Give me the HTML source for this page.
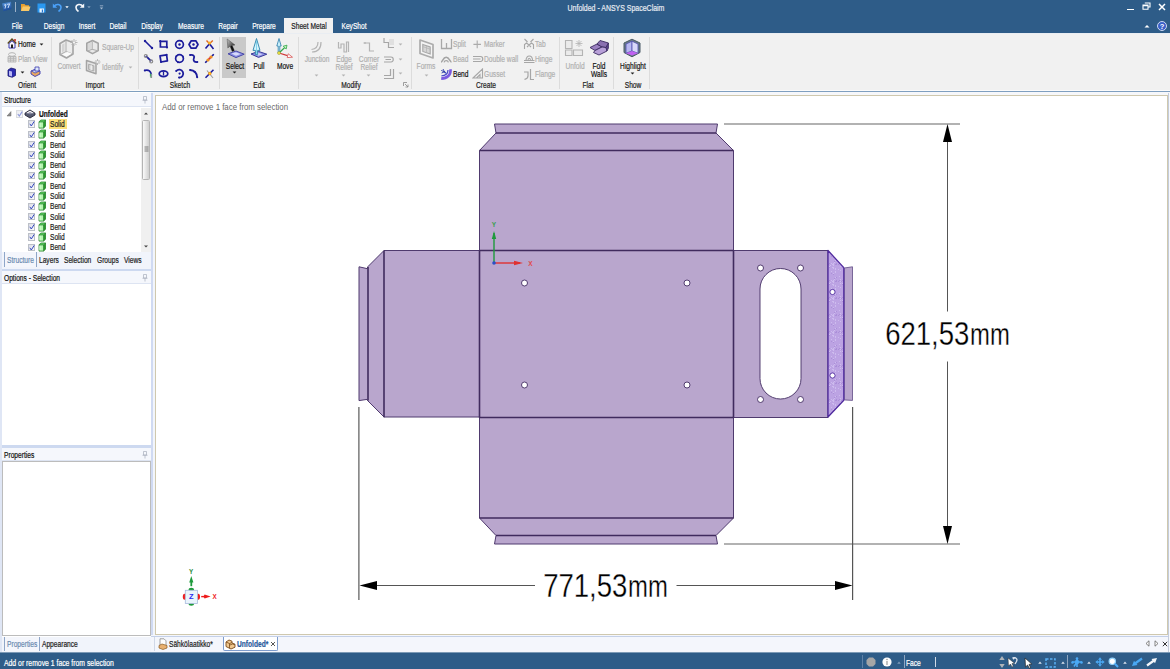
<!DOCTYPE html>
<html><head><meta charset="utf-8"><title>Unfolded - ANSYS SpaceClaim</title>
<style>
*{box-sizing:border-box;margin:0;padding:0}
html,body{width:1170px;height:669px;overflow:hidden;background:#fff}
body{position:relative;font-family:"Liberation Sans",sans-serif;font-size:8px;color:#111;line-height:10px}
.a{position:absolute;white-space:nowrap}
#top{left:0;top:0;width:1170px;height:33px;background:#2e5c88}
#title{left:516.4px;top:3px;width:200px;text-align:center;color:#e6ebf2;font-size:8.5px;transform:scaleX(.82);-webkit-text-stroke:.2px}
.m{-webkit-text-stroke:.2px;color:#fff;top:20.5px;font-size:8.5px;transform:translateX(-50%) scaleX(.78)}
#tabsel{left:284px;top:18px;width:49px;height:16px;background:#f1f1f1}
#ribbon{left:0;top:33px;width:1170px;height:58px;background:#f1f1f1;border-bottom:1px solid #fbfbfb;border-top:1px solid #e9edf2}
#rline{left:0;top:91px;width:1170px;height:1px;background:#7f9fc0}
#rgap{left:0;top:92px;width:1170px;height:4px;background:#f6f7fa}
.gl{-webkit-text-stroke:.2px;top:80px;font-size:8.5px;color:#222;transform:translateX(-50%) scaleX(.78)}
.sep{top:37px;width:1px;height:52px;background:#dcdcdc}
.rt{font-size:8.5px;color:#111}
.dis{color:#b0b0b0}
#left{left:0;top:92px;width:151px;height:561px;background:#fff}
#split{left:151px;top:93px;width:4px;height:560px;background:linear-gradient(90deg,#d0daf2 0,#d0daf2 60%,#f2f5fb 60%)}
.ph{left:0;width:151px;height:13px;background:#f5f7fc;border-bottom:1px solid #dde4f2;padding:2px 0 0 4px;font-size:8.5px;color:#111}
#view{left:155px;top:95px;width:1013px;height:540px;background:#fff;border:1px solid #cfc8ae}
#status{left:0;top:653px;width:1170px;height:16px;background:#2e5c88;color:#fff}
.cb{width:7.5px;height:7.5px;border:1px solid #bcc0c8;background:linear-gradient(135deg,#dadce4,#fafafc)}
.tx{display:inline-block;transform:scaleX(.78);transform-origin:0 50%;font-size:8.5px;-webkit-text-stroke:.2px}
.tc{transform:translateX(-50%) scaleX(.78);font-size:8.5px;-webkit-text-stroke:.2px}
</style></head><body>
<div id="top" class="a"></div>
<div id="title" class="a">Unfolded - ANSYS SpaceClaim</div>
<div id="tabsel" class="a"></div>
<div class="a m" style="left:17px">File</div>
<div class="a m" style="left:54px">Design</div>
<div class="a m" style="left:87px">Insert</div>
<div class="a m" style="left:118px">Detail</div>
<div class="a m" style="left:152px">Display</div>
<div class="a m" style="left:191px">Measure</div>
<div class="a m" style="left:228px">Repair</div>
<div class="a m" style="left:264px">Prepare</div>
<div class="a m" style="left:309px;color:#222">Sheet Metal</div>
<div class="a m" style="left:354px">KeyShot</div>
<div id="ribbon" class="a"></div>
<div id="rline" class="a"></div>
<div id="rgap" class="a"></div>
<!--RIBBON-->
<div class="a sep" style="left:51px"></div>
<div class="a sep" style="left:138px"></div>
<div class="a sep" style="left:219px"></div>
<div class="a sep" style="left:298px"></div>
<div class="a sep" style="left:411px"></div>
<div class="a sep" style="left:559px"></div>
<div class="a sep" style="left:613px"></div>
<div class="a sep" style="left:649px"></div>
<div class="a gl" style="left:27px">Orient</div>
<div class="a gl" style="left:95px">Import</div>
<div class="a gl" style="left:180px">Sketch</div>
<div class="a gl" style="left:259px">Edit</div>
<div class="a gl" style="left:351px">Modify</div>
<div class="a gl" style="left:485.5px">Create</div>
<div class="a gl" style="left:587.5px">Flat</div>
<div class="a gl" style="left:632.5px">Show</div>
<svg class="a" style="left:7px;top:38px" width="10" height="11" viewBox="0 0 10 11"><path d="M0.8,5.5 L5,1.2 L9.2,5.5" fill="none" stroke="#5a4a1a" stroke-width="1.6"/><path d="M7.2,1 h1.6 v2.5 h-1.6z" fill="#c03030"/><path d="M2,5.5 L5,2.8 L8,5.5 V10 H2 Z" fill="#f4f4fa" stroke="#3a3ab0" stroke-width="1"/><rect x="4" y="6.5" width="2" height="3.5" fill="#222"/></svg>
<div class="a rt tx" style="left:17.5px;top:39px">Home</div>
<svg class="a" style="left:39.0px;top:42.5px" width="5" height="3" viewBox="0 0 5 3"><path d="M0.6,0.4 H4.4 L2.5,2.6 Z" fill="#222"/></svg>
<svg class="a" style="left:7px;top:52px" width="10" height="11" viewBox="0 0 10 11"><ellipse cx="5" cy="2.5" rx="3.5" ry="1.8" fill="none" stroke="#b4b4b4" stroke-width="1"/><path d="M1,4.5 H9 V10 H1 Z M1,6.3 H9 M1,8.2 H9 M3.6,4.5 V10 M6.4,4.5 V10" fill="#e4e4e4" stroke="#b4b4b4" stroke-width="0.9"/></svg>
<div class="a rt tx dis" style="left:17.5px;top:53.5px">Plan View</div>
<svg class="a" style="left:7px;top:66.5px" width="10" height="11" viewBox="0 0 10 11"><path d="M1,3 L4,1 L8.5,2.2 V8.5 L5.2,10.3 L1,9 Z" fill="#2a2ab0" stroke="#1a1a70" stroke-width="0.8"/><path d="M2,3.8 L5,4.6 V9.4 L2,8.5 Z" fill="#b8b8f4"/></svg>
<svg class="a" style="left:20.0px;top:70.5px" width="5" height="3" viewBox="0 0 5 3"><path d="M0.6,0.4 H4.4 L2.5,2.6 Z" fill="#222"/></svg>
<svg class="a" style="left:29.5px;top:66px" width="11" height="11" viewBox="0 0 11 11"><path d="M1,5 L6,3 L10,5 V8 L5,10.5 L1,8 Z" fill="#e8a860" stroke="#3a3ab0" stroke-width="0.9"/><path d="M1.5,5 L6,3.3 L9.5,5 L5,7 Z" fill="#c8d8f4" stroke="#3a3ab0" stroke-width="0.7"/><path d="M5,1 h4 v4 h-4z" fill="#dfe8fa" stroke="#3a3ab0" stroke-width="0.8"/></svg>
<svg class="a" style="left:58px;top:38px" width="20" height="22" viewBox="0 0 20 22"><path d="M2,5.5 L8,2 L15,4.5 V16 L8.5,20 L2,16.5 Z" fill="#ececec" stroke="#a4a4a4" stroke-width="1.6" stroke-linejoin="round"/><path d="M8,3 V13.5 L2.5,16.5 M8,13.5 L14.5,16" fill="none" stroke="#b4b4b4" stroke-width="1.1"/><path d="M9.5,14 L13.8,15.6 L8.6,18.6 L4,16.4 Z" fill="#fafafa"/><path d="M4,6.5 L6.5,5.2 V13 L4,14.6 Z" fill="#d4d4d4"/><path d="M16,1 V8 M12.5,4.5 H19.5 M13.5,2 L18.5,7 M18.5,2 L13.5,7" stroke="#b0b0b0" stroke-width="0.9"/><circle cx="16" cy="4.5" r="1.1" fill="#f4f4f4"/></svg>
<div class="a rt tc dis" style="left:69px;top:61px">Convert</div>
<svg class="a" style="left:85px;top:39px" width="15" height="16" viewBox="0 0 15 16"><path d="M1.8,4.2 L7.5,1.6 L13.2,4.2 V11.6 L7.5,14.6 L1.8,11.6 Z" fill="#e9e9e9" stroke="#a4a4a4" stroke-width="1.6" stroke-linejoin="round"/><path d="M7.2,2.5 V10.2 L2.5,12 M7.2,10.2 L12.5,11.8" fill="none" stroke="#b0b0b0" stroke-width="1.1"/><path d="M3,5 L6.3,3.6 V9.6 L3,11 Z" fill="#d8d8d8"/></svg>
<div class="a rt tx dis" style="left:101.5px;top:42px">Square-Up</div>
<svg class="a" style="left:85px;top:58px" width="16" height="17" viewBox="0 0 16 17"><path d="M1.5,2.5 L11,5.5 V15.8 L1.5,12.5 Z" fill="#e4e4e4" stroke="#a4a4a4" stroke-width="1.5" stroke-linejoin="round"/><path d="M3.6,6.2 L8.8,7.8 V13 L3.6,11.4 Z" fill="#d0d0d0" stroke="#acacac" stroke-width="1"/><path d="M6.2,7.2 V12.2" stroke="#f4f4f4" stroke-width="1.2"/><path d="M12.5,1 V7 M9.5,4 H15.5 M10.5,2 L14.5,6 M14.5,2 L10.5,6" stroke="#b0b0b0" stroke-width="0.9"/><circle cx="12.5" cy="4" r="1" fill="#f4f4f4"/></svg>
<div class="a rt tx dis" style="left:101.5px;top:62px">Identify</div>
<svg class="a" style="left:127.5px;top:65.5px" width="5" height="3" viewBox="0 0 5 3"><path d="M0.6,0.4 H4.4 L2.5,2.6 Z" fill="#b4b4b4"/></svg>
<svg class="a" style="left:142.9px;top:38.5px" width="11" height="11" viewBox="0 0 11 11"><path d="M2,2 L9,9" stroke="#1c1c9c" stroke-width="1.6"/><circle cx="2" cy="2" r="1.2" fill="#1c1c9c"/><circle cx="9" cy="9" r="1.2" fill="#1c1c9c"/></svg>
<svg class="a" style="left:158.1px;top:38.5px" width="11" height="11" viewBox="0 0 11 11"><path d="M2.4,2.4 H8.8 V8 H2.4 Z" fill="none" stroke="#1c1c9c" stroke-width="1.7"/><circle cx="2.2" cy="2.2" r="1.1" fill="#1c1c9c"/><circle cx="9" cy="8.4" r="1.1" fill="#1c1c9c"/></svg>
<svg class="a" style="left:173.6px;top:38.5px" width="11" height="11" viewBox="0 0 11 11"><circle cx="5.5" cy="5.5" r="3.9" fill="none" stroke="#1c1c9c" stroke-width="1.7"/><circle cx="5.5" cy="5.5" r="1.2" fill="#1c1c9c"/><circle cx="7.5" cy="1.9" r="0.9" fill="#1c1c9c"/></svg>
<svg class="a" style="left:187.9px;top:38.5px" width="11" height="11" viewBox="0 0 11 11"><path d="M3.2,1.8 H7.8 L10,5.5 L7.8,9.2 H3.2 L1,5.5 Z" fill="none" stroke="#1c1c9c" stroke-width="1.7" stroke-linejoin="round"/><circle cx="5.5" cy="5.5" r="1.2" fill="#1c1c9c"/></svg>
<svg class="a" style="left:203.9px;top:38.5px" width="11" height="11" viewBox="0 0 11 11"><path d="M1.5,9.5 L5.5,4.8 L9.5,10" fill="none" stroke="#1c1c9c" stroke-width="1.6"/><path d="M2.5,1.5 L5.5,4.8 L8.8,1.5" fill="none" stroke="#e06a20" stroke-width="1.4"/><circle cx="5.5" cy="4" r="1.5" fill="#f8b020"/></svg>
<svg class="a" style="left:142.9px;top:52.9px" width="11" height="11" viewBox="0 0 11 11"><path d="M2.8,2.8 L8.2,8.2" stroke="#1c1c9c" stroke-width="1.8"/><circle cx="2.8" cy="3" r="1.5" fill="none" stroke="#8a8a8a" stroke-width="1.1"/><circle cx="8.2" cy="8.4" r="1.5" fill="none" stroke="#8a8a8a" stroke-width="1.1"/></svg>
<svg class="a" style="left:158.1px;top:52.9px" width="11" height="11" viewBox="0 0 11 11"><path d="M2,2.8 L8.6,1.8 L9.4,7.8 L3,9 Z" fill="none" stroke="#1c1c9c" stroke-width="1.7" stroke-linejoin="round"/><circle cx="8.6" cy="1.8" r="1" fill="#1c1c9c"/><circle cx="3" cy="9" r="1" fill="#1c1c9c"/></svg>
<svg class="a" style="left:173.6px;top:52.9px" width="11" height="11" viewBox="0 0 11 11"><circle cx="5.5" cy="5.5" r="3.9" fill="none" stroke="#1c1c9c" stroke-width="1.7"/><circle cx="2.4" cy="3.2" r="1" fill="#1c1c9c"/><circle cx="8.8" cy="3.4" r="1" fill="#1c1c9c"/><circle cx="4" cy="9.2" r="1" fill="#1c1c9c"/></svg>
<svg class="a" style="left:187.9px;top:52.9px" width="11" height="11" viewBox="0 0 11 11"><path d="M2,2 C5.5,1.5 7,3 5.8,5.5 C4.8,7.8 6.5,9.3 9.5,9" fill="none" stroke="#1c1c9c" stroke-width="1.8"/><circle cx="2" cy="2" r="1" fill="#1c1c9c"/><circle cx="9.3" cy="9" r="1" fill="#1c1c9c"/></svg>
<svg class="a" style="left:203.9px;top:52.9px" width="11" height="11" viewBox="0 0 11 11"><path d="M1.5,9.5 L9.5,1.5" stroke="#8a8aa8" stroke-width="1.1"/><path d="M1.2,9.8 L3,8 M8,3 L9.8,1.2" stroke="#1c1c9c" stroke-width="1.5"/><circle cx="4" cy="7" r="1.6" fill="#f09020"/><circle cx="7" cy="4" r="1.6" fill="#f09020"/><circle cx="5.5" cy="5.5" r="1.1" fill="#e03030"/></svg>
<svg class="a" style="left:142.9px;top:67.5px" width="11" height="11" viewBox="0 0 11 11"><path d="M1.5,2.5 C5.5,1 8.3,3.5 8.3,7" fill="none" stroke="#1c1c9c" stroke-width="1.8"/><circle cx="1.8" cy="2.6" r="1" fill="#1c1c9c"/><path d="M8.2,6 V10" stroke="#8a9a90" stroke-width="1.8"/><path d="M7.4,5.5 V8.5" stroke="#30a860" stroke-width="0.9"/></svg>
<svg class="a" style="left:158.1px;top:67.5px" width="11" height="11" viewBox="0 0 11 11"><ellipse cx="5.5" cy="5.7" rx="4.3" ry="2.9" fill="none" stroke="#1c1c9c" stroke-width="1.7"/><path d="M5.5,3.5 V7.5" stroke="#1c1c9c" stroke-width="1.3"/></svg>
<svg class="a" style="left:173.6px;top:67.5px" width="11" height="11" viewBox="0 0 11 11"><path d="M2.2,3 A4,4 0 1 1 5,9.6" fill="none" stroke="#1c1c9c" stroke-width="1.8"/><circle cx="5.6" cy="5.6" r="1.1" fill="#1c1c9c"/><circle cx="2.2" cy="3" r="1" fill="#1c1c9c"/><circle cx="5" cy="9.6" r="1" fill="#1c1c9c"/></svg>
<svg class="a" style="left:187.9px;top:67.5px" width="11" height="11" viewBox="0 0 11 11"><path d="M2,2 C6,2.2 8.8,5 9.2,9.5" fill="none" stroke="#1c1c9c" stroke-width="1.8"/><circle cx="2" cy="2" r="1" fill="#1c1c9c"/><circle cx="6.6" cy="3.9" r="1" fill="#1c1c9c"/><circle cx="9.2" cy="9.3" r="1" fill="#1c1c9c"/></svg>
<svg class="a" style="left:203.9px;top:67.5px" width="11" height="11" viewBox="0 0 11 11"><path d="M1.5,9.8 L9.5,1.8" stroke="#1c1c9c" stroke-width="1.6"/><path d="M3,2.5 L9,10" stroke="#9a9a9a" stroke-width="1.1"/><circle cx="5.8" cy="5.5" r="1.7" fill="#f09020"/><circle cx="5.8" cy="5.5" r="0.8" fill="#f8e020"/></svg>
<div class="a" style="left:222px;top:37px;width:24px;height:41px;background:#c9c9c9"></div>
<svg class="a" style="left:225px;top:37px" width="21" height="22" viewBox="0 0 21 22"><defs><linearGradient id="cg" x1="0" y1="0" x2="1" y2="1"><stop offset="0" stop-color="#c8c8c8"/><stop offset="0.55" stop-color="#555"/><stop offset="1" stop-color="#000"/></linearGradient></defs><path d="M3,16.8 L11,14 L19.2,17.2 L11,20.6 Z" fill="#8f92e6" stroke="#4a4aa8" stroke-width="1"/><path d="M6.5,16.6 L11,15.2 L15.5,17 L11,18.8 Z" fill="#d8dafa"/><path d="M2.2,2 L2.8,11 L5,9.2 L7.2,14.6 L9.4,13.6 L7.2,8.4 L10,8 Z" fill="url(#cg)" stroke="#555" stroke-width="0.5"/><path d="M5.4,9.4 L7.4,14.2 L9,13.4 L7,8.6 Z" fill="#111"/></svg>
<div class="a rt tc" style="left:234.5px;top:60.5px">Select</div>
<svg class="a" style="left:232.0px;top:71.0px" width="5" height="3" viewBox="0 0 5 3"><path d="M0.6,0.4 H4.4 L2.5,2.6 Z" fill="#222"/></svg>
<svg class="a" style="left:248px;top:37px" width="20" height="22" viewBox="0 0 20 22"><path d="M3,17 L10.5,14.4 L18.8,17.2 L10.5,20.4 Z" fill="#8f92e6" stroke="#3a3a98" stroke-width="1"/><path d="M7,17 L10.5,15.8 L14.5,17.2 L10.5,18.8 Z" fill="#d0d2f8"/><path d="M8.5,1.5 L12,13.4 H9.6 V17.6 H7.4 V13.4 H5 Z" fill="#d4f4fc" stroke="#2a82aa" stroke-width="0.9" stroke-linejoin="round"/><path d="M8.5,4 V17" stroke="#7ad0ec" stroke-width="0.9"/></svg>
<div class="a rt tc" style="left:259px;top:60.5px">Pull</div>
<svg class="a" style="left:273.7px;top:36.2px" width="20" height="23" viewBox="0 0 20 23"><path d="M5,2.5 L7.2,10 H5.8 V17 H4.2 V10 H2.8 Z" fill="#c8f0fc" stroke="#2a7aa8" stroke-width="0.8"/><path d="M5,17 L10.5,11.8" stroke="#30a848" stroke-width="1.2"/><path d="M13,9.2 L12.2,13 L9.2,10.2 Z" fill="#c8f4c0" stroke="#30a848" stroke-width="0.8"/><path d="M5,17 L13.5,19.6" stroke="#d03838" stroke-width="1.2"/><path d="M18.5,21.2 L13.2,21.6 L14.2,17.8 Z" fill="#fff" stroke="#d85050" stroke-width="0.8"/><circle cx="5" cy="17" r="1.5" fill="#f4e840" stroke="#8a8a30" stroke-width="0.5"/></svg>
<div class="a rt tc" style="left:284.5px;top:60.5px">Move</div>
<svg class="a" style="left:310px;top:41px" width="13" height="12" viewBox="0 0 13 12"><path d="M8,1 C8,6 6,8 1.5,8.5 M11,1 C11,8 8,11 2,11" fill="none" stroke="#b4b4b4" stroke-width="1.2"/></svg>
<div class="a rt tc dis" style="left:316.5px;top:54.1px">Junction</div>
<svg class="a" style="left:314.0px;top:73.5px" width="5" height="3" viewBox="0 0 5 3"><path d="M0.6,0.4 H4.4 L2.5,2.6 Z" fill="#b4b4b4"/></svg>
<svg class="a" style="left:337px;top:41px" width="13" height="12" viewBox="0 0 13 12"><path d="M1.5,1 V7 H4 V3 H7 V11 H9.5 V1 H11.5 V11" fill="none" stroke="#b4b4b4" stroke-width="1.2"/></svg>
<div class="a rt tc dis" style="left:343.5px;top:54.1px">Edge</div>
<div class="a rt tc dis" style="left:343.5px;top:62.3px">Relief</div>
<svg class="a" style="left:341.0px;top:73.5px" width="5" height="3" viewBox="0 0 5 3"><path d="M0.6,0.4 H4.4 L2.5,2.6 Z" fill="#b4b4b4"/></svg>
<svg class="a" style="left:362px;top:41px" width="13" height="12" viewBox="0 0 13 12"><path d="M1.5,2 H7.5 V10 H12 M3,1 V3" fill="none" stroke="#b4b4b4" stroke-width="1.2"/></svg>
<div class="a rt tc dis" style="left:368.5px;top:54.1px">Corner</div>
<div class="a rt tc dis" style="left:368.5px;top:62.3px">Relief</div>
<svg class="a" style="left:366.0px;top:73.5px" width="5" height="3" viewBox="0 0 5 3"><path d="M0.6,0.4 H4.4 L2.5,2.6 Z" fill="#b4b4b4"/></svg>
<svg class="a" style="left:383.2px;top:37.2px" width="12" height="12" viewBox="0 0 12 12"><path d="M1,1 V5.5 H5.5 V10.5 H11" fill="none" stroke="#a6a6a6" stroke-width="1.2"/><path d="M6,2 H11 V8 H6 Z" fill="#e0e0e0"/></svg>
<svg class="a" style="left:398.0px;top:42.5px" width="5" height="3" viewBox="0 0 5 3"><path d="M0.6,0.4 H4.4 L2.5,2.6 Z" fill="#b4b4b4"/></svg>
<svg class="a" style="left:383.2px;top:55px" width="12" height="9" viewBox="0 0 12 9"><path d="M1,2 H8 C11,2 11,7 8,7 H1 M2.5,4.5 H8" fill="none" stroke="#a6a6a6" stroke-width="1.2"/></svg>
<svg class="a" style="left:398.0px;top:57.5px" width="5" height="3" viewBox="0 0 5 3"><path d="M0.6,0.4 H4.4 L2.5,2.6 Z" fill="#b4b4b4"/></svg>
<svg class="a" style="left:383.2px;top:67.5px" width="12" height="13" viewBox="0 0 12 13"><path d="M1,10.5 H10.5 V1 M1,7.5 H7.5 V1" fill="none" stroke="#a6a6a6" stroke-width="1.2"/></svg>
<svg class="a" style="left:398.0px;top:72.0px" width="5" height="3" viewBox="0 0 5 3"><path d="M0.6,0.4 H4.4 L2.5,2.6 Z" fill="#b4b4b4"/></svg>
<svg class="a" style="left:403px;top:82px" width="6" height="6" viewBox="0 0 6 6"><path d="M0.5,4 V0.5 H4 M2,2 L5,5 M5,2.5 V5 H2.5" fill="none" stroke="#888" stroke-width="0.8"/></svg>
<svg class="a" style="left:418px;top:37.5px" width="17" height="22" viewBox="0 0 17 22"><path d="M2,2 L15,6.5 V20 L2,15.5 Z" fill="#f4f4f4" stroke="#acacac" stroke-width="1.7" stroke-linejoin="round"/><path d="M4.8,6.4 L12.2,9 V16 L4.8,13.4 Z" fill="#d6d6d6" stroke="#a8a8a8" stroke-width="1.1"/><path d="M4.8,8.6 L12.2,11.2 M8.5,7.8 V14.6" stroke="#b8b8b8" stroke-width="0.8"/></svg>
<div class="a rt tc dis" style="left:426px;top:60.5px">Forms</div>
<svg class="a" style="left:423.5px;top:73.5px" width="5" height="3" viewBox="0 0 5 3"><path d="M0.6,0.4 H4.4 L2.5,2.6 Z" fill="#b4b4b4"/></svg>
<svg class="a" style="left:440px;top:38px" width="13" height="12" viewBox="0 0 13 12"><path d="M1.5,1 V10.5 H11.5 V1 M6.5,5 V10.5" fill="none" stroke="#a8a8a8" stroke-width="1.3"/></svg>
<div class="a rt tx dis" style="left:453.0px;top:39px">Split</div>
<svg class="a" style="left:440px;top:54.5px" width="13" height="9" viewBox="0 0 13 9"><path d="M1,7 C2.5,7 3,2.2 6.2,2.2 C9.4,2.2 9.8,7 11.5,7" fill="none" stroke="#a4a4a4" stroke-width="1.5"/><path d="M4,7.4 C4.6,5 7.8,5 8.4,7.4" fill="none" stroke="#a4a4a4" stroke-width="1.2"/></svg>
<div class="a rt tx dis" style="left:453.0px;top:54px">Bead</div>
<svg class="a" style="left:440px;top:68px" width="13" height="12" viewBox="0 0 13 12"><path d="M10.6,1.2 C10.8,7 7.5,10.4 1.2,10.6" fill="none" stroke="#7a5ae0" stroke-width="2.6"/><path d="M8,2 C8,5.6 5.6,7.8 1.4,7.8" fill="none" stroke="#4a4ac8" stroke-width="1.3"/><path d="M1.2,2.4 L6,4.6 M3,1 L5.4,5.6 M1.6,5 L5,3.6" stroke="#2a3aa8" stroke-width="0.9"/></svg>
<div class="a rt tx" style="left:453.0px;top:69px">Bend</div>
<svg class="a" style="left:472px;top:38.5px" width="11" height="11" viewBox="0 0 11 11"><path d="M5.2,1.6 V9.2 M1.4,5.4 H9" stroke="#ababab" stroke-width="1.1"/></svg>
<div class="a rt tx dis" style="left:484.0px;top:39px">Marker</div>
<svg class="a" style="left:472px;top:55px" width="12" height="8" viewBox="0 0 12 8"><path d="M1,1.5 H8.5 C11.5,1.5 11.5,6.5 8.5,6.5 H1 M1,4 H8.5" fill="none" stroke="#a6a6a6" stroke-width="1.2"/></svg>
<div class="a rt tx dis" style="left:484.0px;top:54px">Double wall</div>
<svg class="a" style="left:472px;top:68px" width="12" height="11" viewBox="0 0 12 11"><path d="M1,10 L10.5,1 V10 Z M4.5,10 L8,6.5 V10" fill="none" stroke="#a6a6a6" stroke-width="1.1"/></svg>
<div class="a rt tx dis" style="left:484.0px;top:69px">Gusset</div>
<svg class="a" style="left:523px;top:38px" width="12" height="12" viewBox="0 0 12 12"><path d="M1.5,1 L4.5,4 M10.5,1 L7.5,4 M1.5,11 V6.5 L3.5,5 L6,7 L8.5,5 L10.5,6.5 V11 M4,9 L6,7 L8,9" fill="none" stroke="#a6a6a6" stroke-width="1.1"/></svg>
<div class="a rt tx dis" style="left:535.0px;top:39px">Tab</div>
<svg class="a" style="left:523px;top:54px" width="12" height="10" viewBox="0 0 12 10"><path d="M1,8.5 H11.5 M1,6.5 H11.5" stroke="#a6a6a6" stroke-width="1"/><path d="M3,6.5 C3,0.5 9.5,0.5 9.5,6.5 M5,6.5 C5,3.5 7.5,3.5 7.5,6.5" fill="none" stroke="#a6a6a6" stroke-width="1.1"/></svg>
<div class="a rt tx dis" style="left:535.0px;top:54px">Hinge</div>
<svg class="a" style="left:523px;top:67.5px" width="12" height="13" viewBox="0 0 12 13"><path d="M1,4 H5 V8 C5,10.5 3,11 1.5,11.5 M7.5,1 V11.5 H11" fill="none" stroke="#a6a6a6" stroke-width="1.2"/></svg>
<div class="a rt tx dis" style="left:535.0px;top:69px">Flange</div>
<svg class="a" style="left:564px;top:39px" width="20" height="18" viewBox="0 0 20 18"><path d="M1.5,1.5 H8 V9.5 H1.5 Z M1.5,11 H8 V16.5 H1.5 Z M9.5,11 H18.5 V16.5 H9.5 Z" fill="#ebebeb" stroke="#b4b4b4" stroke-width="1.1"/><path d="M15,1 V8 M11.5,4.5 H18.5 M12.5,2 L17.5,7 M17.5,2 L12.5,7" stroke="#b4b4b4" stroke-width="0.8"/></svg>
<div class="a rt tc dis" style="left:574.5px;top:60.5px">Unfold</div>
<svg class="a" style="left:589px;top:39px" width="21" height="18" viewBox="0 0 21 18"><path d="M1,8.5 L8,5 L13,8 L6,11.5 Z" fill="#9a80c0" stroke="#3a2a60" stroke-width="0.9"/><path d="M8,5 L11,1.5 L19.5,4 L17,8.5 L13,8 Z" fill="#8a70b0" stroke="#3a2a60" stroke-width="0.9"/><path d="M6,11.5 L13,8 L17,8.5 L18,12 L10,16 L4.5,13.5 Z" fill="#b8a0d8" stroke="#3a2a60" stroke-width="0.9"/><path d="M17,8.5 L19.5,4 V9 L18,12 Z" fill="#5a4088" stroke="#3a2a60" stroke-width="0.7"/></svg>
<div class="a rt tc" style="left:598.8px;top:60.5px">Fold</div>
<div class="a rt tc" style="left:598.8px;top:69px">Walls</div>
<svg class="a" style="left:622px;top:38px" width="20" height="20" viewBox="0 0 20 20"><path d="M2,5 L10,1.2 L18,5 V14.5 L10,18.8 L2,14.5 Z" fill="#6a7a88" stroke="#4a5a66" stroke-width="1"/><path d="M4,6 L10,3.2 V13 L4,15.2 Z" fill="#b8b8f0" stroke="#5050b0" stroke-width="0.8"/><path d="M10,3.2 L16,6 V15.2 L10,13 Z" fill="#d8d8fa" stroke="#5050b0" stroke-width="0.8"/><path d="M4,15.2 L10,13 L16,15.2 L10,17.4 Z" fill="#c060f0"/></svg>
<div class="a rt tc" style="left:632.5px;top:60.5px">Highlight</div>
<svg class="a" style="left:630.0px;top:71.5px" width="5" height="3" viewBox="0 0 5 3"><path d="M0.6,0.4 H4.4 L2.5,2.6 Z" fill="#222"/></svg>
<!--/RIBBON-->
<div id="left" class="a"></div>
<div id="split" class="a"></div>
<!--LEFT-->
<div class="a ph" style="top:93px;height:14px"><span class="tx">Structure</span></div>
<svg class="a" style="left:142px;top:96px" width="6" height="8" viewBox="0 0 6 8"><path d="M1.5,0.5 H4.5 V4 H1.5 Z M0.5,4.3 H5.5 M3,4.5 V7.5" fill="none" stroke="#a8adbc" stroke-width="0.7"/></svg>
<svg class="a" style="left:6px;top:110px" width="6" height="7" viewBox="0 0 6 7"><path d="M5,1.6 V6 H1 Z" fill="#8a8a8a" stroke="#6a6a6a" stroke-width="0.5"/></svg>
<div class="a cb" style="left:15.5px;top:110px;opacity:.55"></div>
<svg class="a" style="left:15.5px;top:110px;opacity:.5" width="8" height="8" viewBox="0 0 8 8"><path d="M1.8,4 L3.3,6 L6.2,1.6" fill="none" stroke="#2a3fc0" stroke-width="1.1"/></svg>
<svg class="a" style="left:24px;top:109px" width="12" height="10" viewBox="0 0 12 10"><path d="M1,4.2 L6,1 L11,4.2 L6,7.2 Z" fill="#f4f4f8" stroke="#2a2a3a" stroke-width="1"/><path d="M1,4.2 V6 L6,9 L11,6 V4.2" fill="#555a70" stroke="#2a2a3a" stroke-width="0.9"/><path d="M4,4.2 L6,3 L8,4.2 L6,5.4 Z" fill="#8a8aa0"/></svg>
<div class="a tx" style="left:39px;top:109px;font-weight:bold;color:#111;font-size:8.5px">Unfolded</div>
<div class="a cb" style="left:27.5px;top:120.4px"></div>
<svg class="a" style="left:27.5px;top:120.4px" width="8" height="8" viewBox="0 0 8 8"><path d="M1.8,3.8 L3.3,6 L6.2,1.4" fill="none" stroke="#3448c0" stroke-width="1"/></svg>
<svg class="a" style="left:37.5px;top:119.1px" width="9" height="10" viewBox="0 0 9 10"><path d="M1,2.9 H5.6 V9.1 H1 Z" fill="#b6f6ae"/><path d="M1,2.9 L2.8,1 H7.5 L5.6,2.9 Z" fill="#6cdc6c"/><path d="M5.6,2.9 L7.5,1 V7.3 L5.6,9.1 Z" fill="#2c9c2c"/><path d="M1,2.9 L2.8,1 H7.5 V7.3 L5.6,9.1 H1 Z M1,2.9 H5.6 V9.1 M5.6,2.9 L7.5,1" fill="none" stroke="#1e7e26" stroke-width="0.75" stroke-linejoin="round"/><path d="M1.9,3.8 V8.2" stroke="#eafff0" stroke-width="0.8"/></svg>
<div class="a" style="left:49px;top:119.1px;width:17.5px;height:10px;background:#fbe07a"></div>
<div class="a tx" style="left:50px;top:119.1px;color:#222">Solid</div>
<div class="a cb" style="left:27.5px;top:130.7px"></div>
<svg class="a" style="left:27.5px;top:130.7px" width="8" height="8" viewBox="0 0 8 8"><path d="M1.8,3.8 L3.3,6 L6.2,1.4" fill="none" stroke="#3448c0" stroke-width="1"/></svg>
<svg class="a" style="left:37.5px;top:129.4px" width="9" height="10" viewBox="0 0 9 10"><path d="M1,2.9 H5.6 V9.1 H1 Z" fill="#b6f6ae"/><path d="M1,2.9 L2.8,1 H7.5 L5.6,2.9 Z" fill="#6cdc6c"/><path d="M5.6,2.9 L7.5,1 V7.3 L5.6,9.1 Z" fill="#2c9c2c"/><path d="M1,2.9 L2.8,1 H7.5 V7.3 L5.6,9.1 H1 Z M1,2.9 H5.6 V9.1 M5.6,2.9 L7.5,1" fill="none" stroke="#1e7e26" stroke-width="0.75" stroke-linejoin="round"/><path d="M1.9,3.8 V8.2" stroke="#eafff0" stroke-width="0.8"/></svg>
<div class="a tx" style="left:50px;top:129.4px;color:#222">Solid</div>
<div class="a cb" style="left:27.5px;top:140.9px"></div>
<svg class="a" style="left:27.5px;top:140.9px" width="8" height="8" viewBox="0 0 8 8"><path d="M1.8,3.8 L3.3,6 L6.2,1.4" fill="none" stroke="#3448c0" stroke-width="1"/></svg>
<svg class="a" style="left:37.5px;top:139.6px" width="9" height="10" viewBox="0 0 9 10"><path d="M1,2.9 H5.6 V9.1 H1 Z" fill="#b6f6ae"/><path d="M1,2.9 L2.8,1 H7.5 L5.6,2.9 Z" fill="#6cdc6c"/><path d="M5.6,2.9 L7.5,1 V7.3 L5.6,9.1 Z" fill="#2c9c2c"/><path d="M1,2.9 L2.8,1 H7.5 V7.3 L5.6,9.1 H1 Z M1,2.9 H5.6 V9.1 M5.6,2.9 L7.5,1" fill="none" stroke="#1e7e26" stroke-width="0.75" stroke-linejoin="round"/><path d="M1.9,3.8 V8.2" stroke="#eafff0" stroke-width="0.8"/></svg>
<div class="a tx" style="left:50px;top:139.6px;color:#222">Bend</div>
<div class="a cb" style="left:27.5px;top:151.2px"></div>
<svg class="a" style="left:27.5px;top:151.2px" width="8" height="8" viewBox="0 0 8 8"><path d="M1.8,3.8 L3.3,6 L6.2,1.4" fill="none" stroke="#3448c0" stroke-width="1"/></svg>
<svg class="a" style="left:37.5px;top:149.9px" width="9" height="10" viewBox="0 0 9 10"><path d="M1,2.9 H5.6 V9.1 H1 Z" fill="#b6f6ae"/><path d="M1,2.9 L2.8,1 H7.5 L5.6,2.9 Z" fill="#6cdc6c"/><path d="M5.6,2.9 L7.5,1 V7.3 L5.6,9.1 Z" fill="#2c9c2c"/><path d="M1,2.9 L2.8,1 H7.5 V7.3 L5.6,9.1 H1 Z M1,2.9 H5.6 V9.1 M5.6,2.9 L7.5,1" fill="none" stroke="#1e7e26" stroke-width="0.75" stroke-linejoin="round"/><path d="M1.9,3.8 V8.2" stroke="#eafff0" stroke-width="0.8"/></svg>
<div class="a tx" style="left:50px;top:149.9px;color:#222">Solid</div>
<div class="a cb" style="left:27.5px;top:161.5px"></div>
<svg class="a" style="left:27.5px;top:161.5px" width="8" height="8" viewBox="0 0 8 8"><path d="M1.8,3.8 L3.3,6 L6.2,1.4" fill="none" stroke="#3448c0" stroke-width="1"/></svg>
<svg class="a" style="left:37.5px;top:160.2px" width="9" height="10" viewBox="0 0 9 10"><path d="M1,2.9 H5.6 V9.1 H1 Z" fill="#b6f6ae"/><path d="M1,2.9 L2.8,1 H7.5 L5.6,2.9 Z" fill="#6cdc6c"/><path d="M5.6,2.9 L7.5,1 V7.3 L5.6,9.1 Z" fill="#2c9c2c"/><path d="M1,2.9 L2.8,1 H7.5 V7.3 L5.6,9.1 H1 Z M1,2.9 H5.6 V9.1 M5.6,2.9 L7.5,1" fill="none" stroke="#1e7e26" stroke-width="0.75" stroke-linejoin="round"/><path d="M1.9,3.8 V8.2" stroke="#eafff0" stroke-width="0.8"/></svg>
<div class="a tx" style="left:50px;top:160.2px;color:#222">Bend</div>
<div class="a cb" style="left:27.5px;top:171.8px"></div>
<svg class="a" style="left:27.5px;top:171.8px" width="8" height="8" viewBox="0 0 8 8"><path d="M1.8,3.8 L3.3,6 L6.2,1.4" fill="none" stroke="#3448c0" stroke-width="1"/></svg>
<svg class="a" style="left:37.5px;top:170.4px" width="9" height="10" viewBox="0 0 9 10"><path d="M1,2.9 H5.6 V9.1 H1 Z" fill="#b6f6ae"/><path d="M1,2.9 L2.8,1 H7.5 L5.6,2.9 Z" fill="#6cdc6c"/><path d="M5.6,2.9 L7.5,1 V7.3 L5.6,9.1 Z" fill="#2c9c2c"/><path d="M1,2.9 L2.8,1 H7.5 V7.3 L5.6,9.1 H1 Z M1,2.9 H5.6 V9.1 M5.6,2.9 L7.5,1" fill="none" stroke="#1e7e26" stroke-width="0.75" stroke-linejoin="round"/><path d="M1.9,3.8 V8.2" stroke="#eafff0" stroke-width="0.8"/></svg>
<div class="a tx" style="left:50px;top:170.4px;color:#222">Solid</div>
<div class="a cb" style="left:27.5px;top:182.0px"></div>
<svg class="a" style="left:27.5px;top:182.0px" width="8" height="8" viewBox="0 0 8 8"><path d="M1.8,3.8 L3.3,6 L6.2,1.4" fill="none" stroke="#3448c0" stroke-width="1"/></svg>
<svg class="a" style="left:37.5px;top:180.7px" width="9" height="10" viewBox="0 0 9 10"><path d="M1,2.9 H5.6 V9.1 H1 Z" fill="#b6f6ae"/><path d="M1,2.9 L2.8,1 H7.5 L5.6,2.9 Z" fill="#6cdc6c"/><path d="M5.6,2.9 L7.5,1 V7.3 L5.6,9.1 Z" fill="#2c9c2c"/><path d="M1,2.9 L2.8,1 H7.5 V7.3 L5.6,9.1 H1 Z M1,2.9 H5.6 V9.1 M5.6,2.9 L7.5,1" fill="none" stroke="#1e7e26" stroke-width="0.75" stroke-linejoin="round"/><path d="M1.9,3.8 V8.2" stroke="#eafff0" stroke-width="0.8"/></svg>
<div class="a tx" style="left:50px;top:180.7px;color:#222">Bend</div>
<div class="a cb" style="left:27.5px;top:192.3px"></div>
<svg class="a" style="left:27.5px;top:192.3px" width="8" height="8" viewBox="0 0 8 8"><path d="M1.8,3.8 L3.3,6 L6.2,1.4" fill="none" stroke="#3448c0" stroke-width="1"/></svg>
<svg class="a" style="left:37.5px;top:191.0px" width="9" height="10" viewBox="0 0 9 10"><path d="M1,2.9 H5.6 V9.1 H1 Z" fill="#b6f6ae"/><path d="M1,2.9 L2.8,1 H7.5 L5.6,2.9 Z" fill="#6cdc6c"/><path d="M5.6,2.9 L7.5,1 V7.3 L5.6,9.1 Z" fill="#2c9c2c"/><path d="M1,2.9 L2.8,1 H7.5 V7.3 L5.6,9.1 H1 Z M1,2.9 H5.6 V9.1 M5.6,2.9 L7.5,1" fill="none" stroke="#1e7e26" stroke-width="0.75" stroke-linejoin="round"/><path d="M1.9,3.8 V8.2" stroke="#eafff0" stroke-width="0.8"/></svg>
<div class="a tx" style="left:50px;top:191.0px;color:#222">Solid</div>
<div class="a cb" style="left:27.5px;top:202.6px"></div>
<svg class="a" style="left:27.5px;top:202.6px" width="8" height="8" viewBox="0 0 8 8"><path d="M1.8,3.8 L3.3,6 L6.2,1.4" fill="none" stroke="#3448c0" stroke-width="1"/></svg>
<svg class="a" style="left:37.5px;top:201.3px" width="9" height="10" viewBox="0 0 9 10"><path d="M1,2.9 H5.6 V9.1 H1 Z" fill="#b6f6ae"/><path d="M1,2.9 L2.8,1 H7.5 L5.6,2.9 Z" fill="#6cdc6c"/><path d="M5.6,2.9 L7.5,1 V7.3 L5.6,9.1 Z" fill="#2c9c2c"/><path d="M1,2.9 L2.8,1 H7.5 V7.3 L5.6,9.1 H1 Z M1,2.9 H5.6 V9.1 M5.6,2.9 L7.5,1" fill="none" stroke="#1e7e26" stroke-width="0.75" stroke-linejoin="round"/><path d="M1.9,3.8 V8.2" stroke="#eafff0" stroke-width="0.8"/></svg>
<div class="a tx" style="left:50px;top:201.3px;color:#222">Bend</div>
<div class="a cb" style="left:27.5px;top:212.8px"></div>
<svg class="a" style="left:27.5px;top:212.8px" width="8" height="8" viewBox="0 0 8 8"><path d="M1.8,3.8 L3.3,6 L6.2,1.4" fill="none" stroke="#3448c0" stroke-width="1"/></svg>
<svg class="a" style="left:37.5px;top:211.5px" width="9" height="10" viewBox="0 0 9 10"><path d="M1,2.9 H5.6 V9.1 H1 Z" fill="#b6f6ae"/><path d="M1,2.9 L2.8,1 H7.5 L5.6,2.9 Z" fill="#6cdc6c"/><path d="M5.6,2.9 L7.5,1 V7.3 L5.6,9.1 Z" fill="#2c9c2c"/><path d="M1,2.9 L2.8,1 H7.5 V7.3 L5.6,9.1 H1 Z M1,2.9 H5.6 V9.1 M5.6,2.9 L7.5,1" fill="none" stroke="#1e7e26" stroke-width="0.75" stroke-linejoin="round"/><path d="M1.9,3.8 V8.2" stroke="#eafff0" stroke-width="0.8"/></svg>
<div class="a tx" style="left:50px;top:211.5px;color:#222">Solid</div>
<div class="a cb" style="left:27.5px;top:223.1px"></div>
<svg class="a" style="left:27.5px;top:223.1px" width="8" height="8" viewBox="0 0 8 8"><path d="M1.8,3.8 L3.3,6 L6.2,1.4" fill="none" stroke="#3448c0" stroke-width="1"/></svg>
<svg class="a" style="left:37.5px;top:221.8px" width="9" height="10" viewBox="0 0 9 10"><path d="M1,2.9 H5.6 V9.1 H1 Z" fill="#b6f6ae"/><path d="M1,2.9 L2.8,1 H7.5 L5.6,2.9 Z" fill="#6cdc6c"/><path d="M5.6,2.9 L7.5,1 V7.3 L5.6,9.1 Z" fill="#2c9c2c"/><path d="M1,2.9 L2.8,1 H7.5 V7.3 L5.6,9.1 H1 Z M1,2.9 H5.6 V9.1 M5.6,2.9 L7.5,1" fill="none" stroke="#1e7e26" stroke-width="0.75" stroke-linejoin="round"/><path d="M1.9,3.8 V8.2" stroke="#eafff0" stroke-width="0.8"/></svg>
<div class="a tx" style="left:50px;top:221.8px;color:#222">Bend</div>
<div class="a cb" style="left:27.5px;top:233.4px"></div>
<svg class="a" style="left:27.5px;top:233.4px" width="8" height="8" viewBox="0 0 8 8"><path d="M1.8,3.8 L3.3,6 L6.2,1.4" fill="none" stroke="#3448c0" stroke-width="1"/></svg>
<svg class="a" style="left:37.5px;top:232.1px" width="9" height="10" viewBox="0 0 9 10"><path d="M1,2.9 H5.6 V9.1 H1 Z" fill="#b6f6ae"/><path d="M1,2.9 L2.8,1 H7.5 L5.6,2.9 Z" fill="#6cdc6c"/><path d="M5.6,2.9 L7.5,1 V7.3 L5.6,9.1 Z" fill="#2c9c2c"/><path d="M1,2.9 L2.8,1 H7.5 V7.3 L5.6,9.1 H1 Z M1,2.9 H5.6 V9.1 M5.6,2.9 L7.5,1" fill="none" stroke="#1e7e26" stroke-width="0.75" stroke-linejoin="round"/><path d="M1.9,3.8 V8.2" stroke="#eafff0" stroke-width="0.8"/></svg>
<div class="a tx" style="left:50px;top:232.1px;color:#222">Solid</div>
<div class="a cb" style="left:27.5px;top:243.6px"></div>
<svg class="a" style="left:27.5px;top:243.6px" width="8" height="8" viewBox="0 0 8 8"><path d="M1.8,3.8 L3.3,6 L6.2,1.4" fill="none" stroke="#3448c0" stroke-width="1"/></svg>
<svg class="a" style="left:37.5px;top:242.3px" width="9" height="10" viewBox="0 0 9 10"><path d="M1,2.9 H5.6 V9.1 H1 Z" fill="#b6f6ae"/><path d="M1,2.9 L2.8,1 H7.5 L5.6,2.9 Z" fill="#6cdc6c"/><path d="M5.6,2.9 L7.5,1 V7.3 L5.6,9.1 Z" fill="#2c9c2c"/><path d="M1,2.9 L2.8,1 H7.5 V7.3 L5.6,9.1 H1 Z M1,2.9 H5.6 V9.1 M5.6,2.9 L7.5,1" fill="none" stroke="#1e7e26" stroke-width="0.75" stroke-linejoin="round"/><path d="M1.9,3.8 V8.2" stroke="#eafff0" stroke-width="0.8"/></svg>
<div class="a tx" style="left:50px;top:242.3px;color:#222">Bend</div>
<div class="a" style="left:141px;top:108px;width:9.5px;height:144px;background:#f0f0f0"></div>
<div class="a" style="left:141.5px;top:120px;width:8.5px;height:60px;border:1px solid #b4b4b4;border-radius:1.5px;background:linear-gradient(90deg,#fbfbfb,#cfcfcf)"></div>
<svg class="a" style="left:143px;top:111px" width="6" height="5" viewBox="0 0 6 5"><path d="M1,3.6 L3,1.4 L5,3.6 Z" fill="#444"/></svg>
<svg class="a" style="left:143px;top:244px" width="6" height="5" viewBox="0 0 6 5"><path d="M1,1.4 L3,3.6 L5,1.4 Z" fill="#444"/></svg>
<svg class="a" style="left:143.5px;top:146px" width="5" height="6" viewBox="0 0 5 6"><path d="M0.5,1 H4.5 M0.5,3 H4.5 M0.5,5 H4.5" stroke="#666" stroke-width="0.8"/></svg>
<div class="a" style="left:0;top:252px;width:151px;height:17px;background:#f1f4fb"></div>
<div class="a" style="left:4px;top:252px;width:32.5px;height:15px;border-left:1px solid #8fa6c8;border-right:1px solid #8fa6c8;background:#f4f6fc"></div>
<div class="a tx" style="left:6.5px;top:255px;color:#6a8ab0">Structure</div>
<div class="a tx" style="left:38.5px;top:255px;color:#222">Layers</div>
<div class="a tx" style="left:64px;top:255px;color:#222">Selection</div>
<div class="a tx" style="left:97px;top:255px;color:#222">Groups</div>
<div class="a tx" style="left:124px;top:255px;color:#222">Views</div>
<div class="a" style="left:0;top:268.5px;width:151px;height:2px;background:#cdd9f0"></div>
<div class="a ph" style="top:270.5px;height:13px"><span class="tx">Options - Selection</span></div>
<svg class="a" style="left:142px;top:273.5px" width="6" height="8" viewBox="0 0 6 8"><path d="M1.5,0.5 H4.5 V4 H1.5 Z M0.5,4.3 H5.5 M3,4.5 V7.5" fill="none" stroke="#a8adbc" stroke-width="0.7"/></svg>
<div class="a" style="left:0;top:444.5px;width:151px;height:3px;background:#cdd9f0"></div>
<div class="a ph" style="top:447.5px;height:13px"><span class="tx">Properties</span></div>
<svg class="a" style="left:142px;top:450.5px" width="6" height="8" viewBox="0 0 6 8"><path d="M1.5,0.5 H4.5 V4 H1.5 Z M0.5,4.3 H5.5 M3,4.5 V7.5" fill="none" stroke="#a8adbc" stroke-width="0.7"/></svg>
<div class="a" style="left:1.5px;top:461px;width:149.5px;height:175px;border:1px solid #bcbcbc;background:#fff"></div>
<div class="a" style="left:0;top:637px;width:151px;height:16px;background:#f1f4fb"></div>
<div class="a" style="left:4px;top:637px;width:36px;height:13.5px;border-left:1px solid #8fa6c8;border-right:1px solid #8fa6c8;background:#f4f6fc"></div>
<div class="a tx" style="left:7px;top:638.8px;color:#6a8ab0">Properties</div>
<div class="a tx" style="left:41.5px;top:638.8px;color:#222">Appearance</div>
<div class="a" style="left:0;top:92px;width:1.5px;height:561px;background:#dfe6f5"></div>
<!--/LEFT-->
<div id="view" class="a"></div>
<!--VIEW-->
<svg class="a" style="left:0;top:0" width="1170" height="669" viewBox="0 0 1170 669">
<defs><pattern id="dz" width="13" height="17" patternUnits="userSpaceOnUse"><rect width="13" height="17" fill="#bca3e3"/><path d="M1,12h1v1h-1z M7,4h1v1h-1z M0,12h1v1h-1z M8,9h1v1h-1z M3,16h1v1h-1z M8,11h1v1h-1z M1,8h1v1h-1z M3,0h1v1h-1z M12,8h1v1h-1z M3,5h1v1h-1z M10,11h1v1h-1z M1,10h1v1h-1z M8,7h1v1h-1z M2,7h1v1h-1z M1,9h1v1h-1z M0,9h1v1h-1z M12,16h1v1h-1z M3,13h1v1h-1z M6,14h1v1h-1z M2,7h1v1h-1z M12,1h1v1h-1z M1,1h1v1h-1z M8,15h1v1h-1z M11,10h1v1h-1z M1,13h1v1h-1z M3,14h1v1h-1z" fill="#cdbbee"/><path d="M3,9h1v1h-1z M1,2h1v1h-1z M12,1h1v1h-1z M4,5h1v1h-1z M10,8h1v1h-1z M4,9h1v1h-1z M10,12h1v1h-1z M7,8h1v1h-1z M9,9h1v1h-1z M6,9h1v1h-1z M4,8h1v1h-1z M7,8h1v1h-1z M2,6h1v1h-1z M4,5h1v1h-1z" fill="#ab8fd8"/></pattern></defs>
<g fill="#b9a6cd" stroke="#4f3a6e" stroke-width="1" stroke-linejoin="round">
<!-- vertical strip: top flange, chamfer, body, bottom -->
<path d="M494.5,124 H717.5 L716,133 L733.5,150.5 V518 L716,535.5 L717.5,544 H494.5 L496,535.5 L479.5,518 V150.5 L496,133 Z"/>
<!-- left wing -->
<path d="M479.5,250.5 H384 L368,266.5 L367,268.6 L359,266.8 V400.6 L367,399.4 L368,401 L384,417 H479.5 Z"/>
<!-- right wing -->
<path d="M733.5,250.5 H828 V417.5 H733.5 Z"/>
<!-- right flange -->
<path d="M844.3,268 L852.5,266.8 V400.4 L844.3,399.9 Z" stroke="#6d5a90" stroke-width="0.9"/>
</g>
<g fill="none" stroke="#402b5e" stroke-width="1.5">
<path d="M496,133 H716 M479.5,150.5 H733.5 M479.5,250.5 H733.5 M479.5,417.5 H733.5 M479.5,518 H733.5 M496,535.5 H716"/>
<path d="M384,250.5 V417.2 M368,267 V400.5 M479.5,250.5 V417.5 M733.5,250.5 V417.5" stroke-width="1.6"/>
</g>
<!-- highlighted right chamfer face -->
<path d="M828,250.5 L843.8,267.6 V400.2 L828,417 Z" fill="url(#dz)" stroke="#4f2a9e" stroke-width="1.3" stroke-linejoin="round"/>
<!-- holes -->
<g fill="#fff" stroke="#432d62" stroke-width="0.9">
<circle cx="524.5" cy="283.0" r="3"/><circle cx="687" cy="283.0" r="3"/>
<circle cx="524.5" cy="385.0" r="3"/><circle cx="687" cy="385.0" r="3"/>
<circle cx="760.5" cy="268" r="3"/><circle cx="800.5" cy="268" r="3"/>
<circle cx="760.5" cy="399.5" r="3"/><circle cx="800.5" cy="399.5" r="3"/>
<path d="M760,289 A20.5,20.5 0 0 1 801,289 V378.5 A20.5,20.5 0 0 1 760,378.5 Z"/>
<circle cx="832.5" cy="292" r="2.6" stroke="#4f2a9e"/><circle cx="832.5" cy="375.5" r="2.6" stroke="#4f2a9e"/>
</g>
<!-- dimensions -->
<g stroke="#666" stroke-width="1.2" fill="none">
<path d="M724,124 H960 M724,544 H960"/><path d="M358.9,407 V600" stroke-width="1.1" stroke="#4a4a4a"/>
</g>
<g stroke="#555" stroke-width="1" fill="none">
<path d="M947.5,130 V311.5 M947.5,361.5 V538"/>
<path d="M852.6,407 V600" stroke-width="1.2"/>
<path d="M365,585.5 H535 M676.5,585.5 H846"/>
</g>
<g fill="#000">
<path d="M947.5,124 L952,142 H943 Z M947.5,544 L952,526 H943 Z"/>
<path d="M359.5,585.5 L377,581 V590 Z M852.5,585.5 L835,581 V590 Z"/>
</g>
<g font-family="'Liberation Sans',sans-serif" fill="#000" stroke="#fff" stroke-width="0.3" paint-order="fill stroke">
<text transform="translate(885.2,345) scale(0.81,1)" font-size="34">621,53</text>
<text transform="translate(970,345) scale(0.77,1)" font-size="31">mm</text>
<text transform="translate(543.2,597) scale(0.81,1)" font-size="34">771,53</text>
<text transform="translate(628,597) scale(0.77,1)" font-size="31">mm</text>
</g>
<!-- origin triad in model -->
<g>
<path d="M494,263 V233" stroke="#1e9a3c" stroke-width="1.4"/>
<path d="M494,231 L496.2,239 H491.8 Z" fill="#1e9a3c"/>
<path d="M494,263 H520" stroke="#e03030" stroke-width="1.4"/>
<path d="M523,263 L514,260.8 V265.2 Z" fill="#e03030"/>
<circle cx="494" cy="263" r="1.8" fill="#2a50c8"/>
<text x="491.8" y="227" font-size="6.5" font-weight="bold" fill="#3aa050" font-family="'Liberation Sans',sans-serif">Y</text>
<text x="528.3" y="265.5" font-size="6.5" font-weight="bold" fill="#e04a4a" font-family="'Liberation Sans',sans-serif">X</text>
</g>
<!-- corner triad -->
<g>
<path d="M191.3,582 V586.2" stroke="#1e9a3c" stroke-width="1.8"/>
<path d="M191.3,576 L193.4,582.6 H189.2 Z" fill="#1e9a3c"/>
<ellipse cx="191.3" cy="589.6" rx="2.8" ry="1.8" fill="#1e9a3c"/><ellipse cx="191.3" cy="604" rx="2.8" ry="1.8" fill="#1e9a3c"/>
<ellipse cx="184.6" cy="596.8" rx="1.8" ry="3" fill="#ee1c1c"/><ellipse cx="198.2" cy="596.8" rx="1.8" ry="3" fill="#ee1c1c"/>
<path d="M201.2,596.6 H206" stroke="#ee1c1c" stroke-width="1.4"/>
<path d="M210.6,596.6 L204.6,594.6 L203.4,596.6 L204.6,598.6 Z" fill="#ee1c1c"/>
<rect x="185.3" y="590.3" width="12.2" height="13.3" fill="#e9f4fc" stroke="#a9bbdc" stroke-width="0.8"/>
<text x="188.9" y="599.4" font-size="7.5" font-weight="bold" fill="#2a2af0" font-family="'Liberation Sans',sans-serif">Z</text>
<text x="188.9" y="574.4" font-size="6.3" font-weight="bold" fill="#2a8a3a" font-family="'Liberation Sans',sans-serif">Y</text>
<text x="212.4" y="598.8" font-size="6.3" font-weight="bold" fill="#ee1c1c" font-family="'Liberation Sans',sans-serif">X</text>
</g>
<text transform="translate(162,109.7) scale(.925,1)" font-size="8.5" fill="#6a6a6a" font-family="'Liberation Sans',sans-serif">Add or remove 1 face from selection</text>
</svg>

<!--/VIEW-->
<div id="status" class="a"></div>
<!--STATUS-->
<svg class="a" style="left:1px;top:1px" width="12" height="11" viewBox="0 0 12 11"><defs><linearGradient id="ag" x1="0" y1="0" x2="0.3" y2="1"><stop offset="0" stop-color="#5a9ae0"/><stop offset="1" stop-color="#1a4a98"/></linearGradient></defs><path d="M1.2,2.6 L10,0.8 L10.6,8 L2.4,10.2 Z" fill="url(#ag)"/><path d="M3,4.2 L5,3.6 L4,7.6 M6,3.4 L8.6,2.8 L7,7" stroke="#dcebff" stroke-width="0.9" fill="none"/></svg>
<div class="a" style="left:15px;top:2px;width:1px;height:10px;background:#9db2ca"></div>
<svg class="a" style="left:20px;top:2px" width="11" height="10" viewBox="0 0 11 10"><path d="M1,2 H4.5 L5.5,3.2 H9 V9 H1 Z" fill="#e8a030"/><path d="M1,9 L2.8,4.6 H10.5 L9,9 Z" fill="#f8c868"/></svg>
<svg class="a" style="left:36.5px;top:2.5px" width="9" height="10" viewBox="0 0 9 10"><path d="M0.5,0.5 H8.5 V9.5 H0.5 Z" fill="#2a98f0"/><rect x="2.5" y="5.5" width="4.5" height="4" fill="#e8f4ff"/><rect x="4.8" y="6.5" width="1.3" height="3" fill="#2a78d0"/></svg>
<svg class="a" style="left:51.5px;top:2px" width="11" height="10" viewBox="0 0 11 10"><path d="M2,4.5 C4,1.5 9,2 9,5.5 C9,7.5 8,8.5 6.5,9.5" fill="none" stroke="#4aa0f8" stroke-width="1.6"/><path d="M0.8,1.5 V5.8 H5.2 Z" fill="#4aa0f8"/></svg>
<svg class="a" style="left:65.3px;top:6px" width="4" height="3" viewBox="0 0 4 3"><path d="M0.3,0.3 H3.7 L2,2.3 Z" fill="#fff"/></svg>
<svg class="a" style="left:73.5px;top:2px" width="11" height="10" viewBox="0 0 11 10"><path d="M9,4.5 C7,1.5 2,2 2,5.5 C2,7.5 3,8.5 4.5,9.5" fill="none" stroke="#f4f6fa" stroke-width="1.6"/><path d="M10.2,1.5 V5.8 H5.8 Z" fill="#f4f6fa"/></svg>
<svg class="a" style="left:87.3px;top:6px" width="4" height="3" viewBox="0 0 4 3"><path d="M0.3,0.3 H3.7 L2,2.3 Z" fill="#7f9cba"/></svg>
<svg class="a" style="left:98.8px;top:4.5px" width="5" height="6" viewBox="0 0 5 6"><path d="M0.8,0.8 H4.2" stroke="#a8bad0" stroke-width="0.8"/><path d="M0.8,2.4 H4.2 L2.5,4.4 Z" fill="#a8bad0"/></svg>
<div class="a" style="left:1127px;top:8.6px;width:6.5px;height:1.8px;background:#fff"></div>
<svg class="a" style="left:1141.5px;top:2px" width="9" height="8" viewBox="0 0 9 8"><path d="M2.8,1 H8 V5 H6.2 M1,3 H6 V7.2 H1 Z M1,3.6 H6" fill="none" stroke="#fff" stroke-width="1.1"/></svg>
<svg class="a" style="left:1158px;top:3px" width="8" height="8" viewBox="0 0 8 8"><path d="M1,1 L7,7 M7,1 L1,7" stroke="#fff" stroke-width="1.5"/></svg>
<svg class="a" style="left:1144px;top:24px" width="6" height="4" viewBox="0 0 6 4"><path d="M0.5,3.5 L3,1 L5.5,3.5 Z" fill="#fff"/></svg>
<svg class="a" style="left:1157px;top:20.5px" width="10" height="10" viewBox="0 0 10 10"><circle cx="5" cy="5" r="4.5" fill="#3a60c8" stroke="#dfe6f8" stroke-width="0.9"/><text x="5" y="7.8" font-size="7.5" font-weight="bold" text-anchor="middle" fill="#fff" font-family="'Liberation Sans',sans-serif">?</text></svg>
<div class="a" style="left:151px;top:635px;width:1019px;height:18px;background:#f4f6fc"></div>
<div class="a" style="left:151px;top:636px;width:1019px;height:1px;background:#c4d0e8"></div>
<div class="a" style="left:154px;top:637px;width:69px;height:14px;background:#f4f6fc;border-left:1px solid #d0d8e8"></div>
<svg class="a" style="left:158px;top:638px" width="10" height="12" viewBox="0 0 10 12"><path d="M2,0.8 H6 L8,2.8 V9 H2 Z" fill="#fdfdfd" stroke="#8a8a8a" stroke-width="0.8"/><path d="M1,7.5 L4,6 L9,7.5 V10 L5,11.5 L1,10 Z" fill="#e8b070" stroke="#8a5a20" stroke-width="0.7"/></svg>
<div class="a tx" style="left:169px;top:639px;color:#222">Sähkölaatikko*</div>
<div class="a" style="left:223px;top:636.5px;width:55px;height:14px;background:#fff;border:1px solid #7e9ccc;border-top:none;border-radius:0 0 2px 2px"></div>
<svg class="a" style="left:225px;top:638px" width="11" height="12" viewBox="0 0 11 12"><path d="M1,4 L4,2 L7,3.2 V5 L10,6.2 V9.2 L6,11 L1,8.5 Z" fill="#f0c890" stroke="#7a4a18" stroke-width="0.9"/><path d="M1,4 L4.5,5.5 L7,4.6 M4.5,5.5 V10.2 M4.5,7.2 L7.5,6 L10,6.8" fill="none" stroke="#7a4a18" stroke-width="0.8"/></svg>
<div class="a tx" style="left:237px;top:639px;color:#2a5a9c;font-weight:bold">Unfolded*</div>
<svg class="a" style="left:269.5px;top:640.5px" width="6" height="6" viewBox="0 0 6 6"><path d="M1,1 L5,5 M5,1 L1,5" stroke="#444" stroke-width="0.9"/></svg>
<svg class="a" style="left:1145px;top:639.5px" width="5" height="7" viewBox="0 0 5 7"><path d="M4,0.8 V6.2 L1,3.5 Z" fill="#fff" stroke="#555" stroke-width="0.7"/></svg>
<svg class="a" style="left:1154px;top:639.5px" width="5" height="7" viewBox="0 0 5 7"><path d="M1,0.8 V6.2 L4,3.5 Z" fill="#fff" stroke="#555" stroke-width="0.7"/></svg>
<svg class="a" style="left:1161.5px;top:640.5px" width="6" height="6" viewBox="0 0 6 6"><path d="M0.8,0.8 L5.2,5.2 M5.2,0.8 L0.8,5.2" stroke="#333" stroke-width="1"/></svg>
<div class="a" style="left:1168px;top:93px;width:2px;height:560px;background:linear-gradient(90deg,#c4ccdc 0,#c4ccdc 30%,#f6f8fc 30%)"></div>
<div class="a" style="left:0;top:652px;width:1170px;height:1px;background:#7d9ab6"></div>
<div class="a tx" style="left:4.3px;top:658px;color:#fff;transform:scaleX(.805)">Add or remove 1 face from selection</div>
<div class="a" style="left:861.5px;top:655px;width:1px;height:13px;background:#5f82a8"></div>
<div class="a" style="left:903.5px;top:655px;width:1px;height:13px;background:#8fa6c0"></div>
<div class="a" style="left:935px;top:657px;width:1px;height:10px;background:#d0dae6"></div>
<div class="a" style="left:1066.5px;top:655px;width:1px;height:13px;background:#8fa6c0"></div>
<svg class="a" style="left:866px;top:657px" width="10" height="10" viewBox="0 0 10 10"><path d="M3,0.5 H7 L9.5,3 V7 L7,9.5 H3 L0.5,7 V3 Z" fill="#a6a6a6"/></svg>
<svg class="a" style="left:881.5px;top:657px" width="10" height="10" viewBox="0 0 10 10"><circle cx="5" cy="5" r="4.6" fill="#fdfdfd"/><path d="M5,4 V8" stroke="#9a9a9a" stroke-width="1.2"/><circle cx="5" cy="2.5" r="0.8" fill="#9a9a9a"/></svg>
<svg class="a" style="left:896.5px;top:661px" width="4" height="3" viewBox="0 0 4 3"><path d="M0.2,2.8 L2,0.5 L3.8,2.8 Z" fill="#7f9cba"/></svg>
<div class="a tx" style="left:906px;top:657.5px;color:#fff">Face</div>
<svg class="a" style="left:998.5px;top:655px" width="6" height="14" viewBox="0 0 6 14"><path d="M0.3,5 L3,1 L5.7,5 Z M0.3,9 L3,13 L5.7,9 Z" fill="#b0b4b8"/></svg>
<svg class="a" style="left:1007px;top:656px" width="12" height="12" viewBox="0 0 12 12"><path d="M1,2 L1.5,10 L3.5,8 L5,11 L6.3,10.3 L5,7.5 L7.5,7.2 Z" fill="#fff" stroke="#333" stroke-width="0.5"/><path d="M6,3 C8,0.5 11,2.5 9.5,5.5 L8,8" fill="none" stroke="#dfe6f0" stroke-width="1.3"/><path d="M5,1.5 L7.5,1 L7,3.8 Z" fill="#dfe6f0"/></svg>
<svg class="a" style="left:1023.5px;top:656.5px" width="9" height="12" viewBox="0 0 9 12"><path d="M1,1 L1.5,10 L3.6,8 L5.2,11.3 L6.6,10.6 L5,7.4 L7.8,7 Z" fill="#fff" stroke="#222" stroke-width="0.7"/></svg>
<svg class="a" style="left:1037.7px;top:661px" width="4" height="3" viewBox="0 0 4 3"><path d="M0.2,2.8 L2,0.5 L3.8,2.8 Z" fill="#dfe6f0"/></svg>
<svg class="a" style="left:1044.5px;top:657.5px" width="11" height="10" viewBox="0 0 11 10"><rect x="1" y="1" width="9" height="8" fill="none" stroke="#5ab0f4" stroke-width="1.5" stroke-dasharray="2.5 1.5"/></svg>
<svg class="a" style="left:1060.5px;top:661px" width="4" height="3" viewBox="0 0 4 3"><path d="M0.2,2.8 L2,0.5 L3.8,2.8 Z" fill="#dfe6f0"/></svg>
<svg class="a" style="left:1071px;top:656.5px" width="12" height="11" viewBox="0 0 12 11"><path d="M6,1 V10 M1,5 H11 M6,5 L3,9.5" stroke="#4aa8f4" stroke-width="1.6" fill="none"/><circle cx="6" cy="5" r="2.2" fill="#4aa8f4"/><circle cx="6" cy="1.5" r="1.3" fill="#4aa8f4"/><circle cx="10.5" cy="5.5" r="1.3" fill="#4aa8f4"/><circle cx="1.5" cy="5.5" r="1.3" fill="#4aa8f4"/></svg>
<svg class="a" style="left:1086.5px;top:661px" width="4" height="3" viewBox="0 0 4 3"><path d="M0.2,2.8 L2,0.5 L3.8,2.8 Z" fill="#dfe6f0"/></svg>
<svg class="a" style="left:1095px;top:657px" width="10" height="10" viewBox="0 0 10 10"><path d="M5,0.3 L7,2.8 H5.8 V4.2 H7.2 V3 L9.7,5 L7.2,7 V5.8 H5.8 V7.2 H7 L5,9.7 L3,7.2 H4.2 V5.8 H2.8 V7 L0.3,5 L2.8,3 V4.2 H4.2 V2.8 H3 Z" fill="#4aa8f4"/></svg>
<svg class="a" style="left:1108px;top:656.5px" width="11" height="11" viewBox="0 0 11 11"><circle cx="4.3" cy="4.3" r="3.2" fill="#fff" stroke="#8fd0fa" stroke-width="1.2"/><path d="M6.8,6.8 L10,10" stroke="#4aa8f4" stroke-width="2"/></svg>
<svg class="a" style="left:1122.7px;top:661px" width="4" height="3" viewBox="0 0 4 3"><path d="M0.2,2.8 L2,0.5 L3.8,2.8 Z" fill="#dfe6f0"/></svg>
<svg class="a" style="left:1131px;top:657px" width="12" height="10" viewBox="0 0 12 10"><path d="M11,1.5 L4,6.5" stroke="#4aa8f4" stroke-width="2.2"/><path d="M1,9 L3,3.8 L6.5,8 Z" fill="#4aa8f4"/></svg>
<svg class="a" style="left:1146px;top:657px" width="12" height="10" viewBox="0 0 12 10"><path d="M1,8.5 L8,3.5" stroke="#f4f6fa" stroke-width="2.2"/><path d="M11,1 L9,6.2 L5.5,2 Z" fill="#f4f6fa"/></svg>
<!--/STATUS-->
</body></html>
